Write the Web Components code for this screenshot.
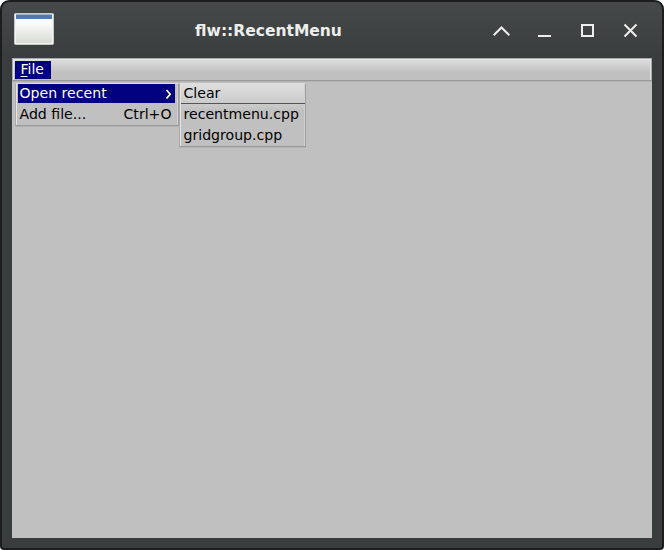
<!DOCTYPE html>
<html lang="en"><head><meta charset="utf-8"><title>flw::RecentMenu</title>
<style>html,body{margin:0;background:#fff}body{font:14px/20px "DejaVu Sans",sans-serif;color:#000}</style></head>
<body>
<app-window caption="flw::RecentMenu">
<menu-bar>
<menu-title>File</menu-title>
<menu-popup slot="popup" class="main">
<menu-item selected submenu>Open recent</menu-item>
<menu-item>Add file...<span slot="key">Ctrl+O</span></menu-item>
</menu-popup>
<menu-popup slot="popup" class="sub">
<menu-item divider>Clear</menu-item>
<menu-item>recentmenu.cpp</menu-item>
<menu-item>gridgroup.cpp</menu-item>
</menu-popup>
</menu-bar>
</app-window>
<script>
function define(name, html, setup) {
  const t = document.createElement('template');
  t.innerHTML = html;
  customElements.define(name, class extends HTMLElement {
    connectedCallback() {
      if (this.shadowRoot) return;
      this.attachShadow({mode: 'open'}).append(t.content.cloneNode(true));
      if (setup) setup(this, this.shadowRoot);
    }
  });
}

define('window-button', `<style>:host{display:block;width:43px;height:24px}svg{display:block}</style>
<svg width="43" height="24" fill="none" stroke="#eeeeec" stroke-width="2"><path/></svg>`, (el, root) => {
  const shapes = {
    shade: 'M13.7 17.3L21.5 9.5L29.3 17.3',
    minimize: 'M15 18H28',
    maximize: 'M16 7H27V18H16Z',
    close: 'M15.5 6.5L27.5 18.5M27.5 6.5L15.5 18.5'
  };
  root.querySelector('path').setAttribute('d', shapes[el.getAttribute('kind')]);
});

define('app-window', `<style>
:host{display:flex;flex-direction:column;box-sizing:border-box;width:664px;height:550px;padding:0 10px 10px;border:2px solid #1b1d1e;border-radius:9px 9px 4px 4px;background:linear-gradient(#454949,#393d3e 56px)}
header{display:grid;grid-template-columns:42px 1fr 172px;height:56px;flex:none}
svg{display:block;margin:11px 0 0 2px}
h1{margin:19px 0 0;font:bold 15.5px/20px "DejaVu Sans",sans-serif;color:#eeeeec;text-align:center;padding-left:3px}
nav{display:flex;margin-top:16px}
main{flex:1;background:#c0c0c0}
</style>
<header>
<svg width="40" height="33"><defs><linearGradient id="g" x2="0" y2="1"><stop offset=".25" stop-color="#fff"/><stop offset="1" stop-color="#d5d8d1"/></linearGradient></defs>
<rect x=".5" y=".5" width="39" height="31" rx="1" fill="url(#g)" stroke="#c6c9c7"/><rect x="1.5" y="1.5" width="37" height="29" fill="none" stroke="#f3f4f2"/><path d="M2 1.5H38V6H2Z" fill="#5079b0"/></svg>
<h1></h1>
<nav><window-button kind="shade"></window-button><window-button kind="minimize"></window-button><window-button kind="maximize"></window-button><window-button kind="close"></window-button></nav>
</header><main><slot></slot></main>`, (el, root) => {
  root.querySelector('h1').textContent = el.getAttribute('caption');
});

define('menu-bar', `<style>
:host{display:block;position:relative}
.bar{display:flex;box-sizing:border-box;height:23px;padding:2px 2px 0;margin-bottom:1px;border:1px solid;border-color:#aaa #aaa #999 #ababab;box-shadow:0 1px #b2b2b2,inset 1px 1px #e6e6e6,inset -1px 0 #e4e4e4;background:linear-gradient(#dedede,#c0c0c0 65%)}
::slotted(.main){position:absolute;left:3px;top:25px;width:164px;height:43px;--fill:#c0c0c0}
::slotted(.sub){position:absolute;left:167px;top:25px;width:127px;height:64px}
</style><div class="bar"><slot></slot></div><slot name="popup"></slot>`);

define('menu-title', `<style>
:host{display:block;box-sizing:border-box;height:18px;width:36px;padding-left:5.5px;line-height:16px;background:#000080;color:#fff}
slot{display:none}u{text-underline-offset:2px;text-decoration-thickness:1px}
</style><u></u><span></span><slot></slot>`, (el, root) => {
  const s = el.textContent;
  root.querySelector('u').textContent = s[0];
  root.querySelector('span').textContent = s.slice(1);
});

define('menu-popup', `<style>
:host{display:flex;flex-direction:column;box-sizing:border-box;padding:0 3px 0 2px;border:1px solid;border-color:#dedede #a0a0a0 #989898 #aaa;box-shadow:0 1px #b4b4b4,inset 1px 0 #e4e4e4,inset -1px 0 #d0d0d0;background:var(--fill,linear-gradient(#dedede,#c8c8c8 22px,#c0c0c0 27px))}
</style><slot></slot>`);

define('menu-item', `<style>
:host{display:flex;flex:none;justify-content:space-between;box-sizing:border-box;height:21px;padding:0 3.5px 0 1.5px;font-size:14.1px;line-height:18px;white-space:nowrap}
:host([selected]){height:19px;margin-bottom:2px;background:#000080;color:#fff}
:host([divider]){margin:0 -3px 1px -1px;padding-left:2.5px;height:20px;border-bottom:1px solid #555}
:host(:last-child){height:20px}
svg{display:none}:host([submenu]) svg{display:block}
</style><span><slot></slot></span><slot name="key"></slot><svg width="8" height="19" fill="none" stroke="#fff" stroke-width="1.7"><path d="M2.5 6L6.2 10.2L2.5 14.4"/></svg>`);
</script></body></html>
